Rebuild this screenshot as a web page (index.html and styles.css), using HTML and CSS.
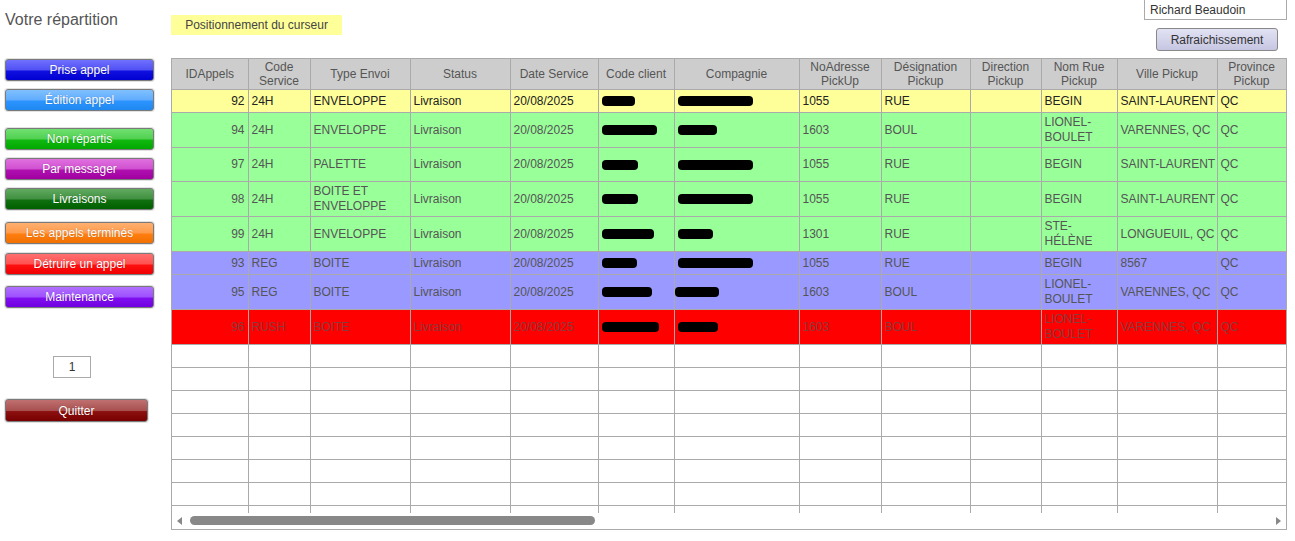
FILE: index.html
```html
<!DOCTYPE html>
<html lang="fr">
<head>
  <meta charset="UTF-8">
  <title>Votre répartition</title>
  <link rel="stylesheet" href="styles.css">
</head>
<body>
  <div class="page">
    <div class="sidebar">
      <div class="title">Votre répartition</div>
      <div class="menu">
        <button class="btn btn-blue">Prise appel</button>
        <button class="btn btn-sky">Édition appel</button>
        <button class="btn btn-green space-lg">Non répartis</button>
        <button class="btn btn-magenta">Par messager</button>
        <button class="btn btn-dkgreen">Livraisons</button>
        <button class="btn btn-orange space-md">Les appels terminés</button>
        <button class="btn btn-red space-sm">Détruire un appel</button>
        <button class="btn btn-purple space-md">Maintenance</button>
      </div>
      <div class="pager"><input class="page-input" type="text" value="1"></div>
      <button class="btn btn-quit">Quitter</button>
    </div>

    <div class="main">
      <div class="topbar">
        <div class="cursor-box">Positionnement du curseur</div>
        <div class="user-area">
          <input class="user-input" type="text" value="Richard Beaudoin">
          <button class="refresh">Rafraichissement</button>
        </div>
      </div>

      <div class="grid-box">
        <div class="grid-view">
          <table class="grid">
            <colgroup>
              <col class="c-id"><col class="c-code"><col class="c-type"><col class="c-status"><col class="c-date">
              <col class="c-client"><col class="c-comp"><col class="c-no"><col class="c-desig"><col class="c-dir">
              <col class="c-rue"><col class="c-ville"><col class="c-prov">
            </colgroup>
            <thead>
              <tr>
                <th>IDAppels</th><th>Code<br>Service</th><th>Type Envoi</th><th>Status</th><th>Date Service</th>
                <th>Code client</th><th>Compagnie</th><th>NoAdresse<br>PickUp</th><th>Désignation<br>Pickup</th>
                <th>Direction<br>Pickup</th><th>Nom Rue<br>Pickup</th><th>Ville Pickup</th><th>Province<br>Pickup</th>
              </tr>
            </thead>
            <tbody>
              <tr class="row-yellow">
                <td class="num">92</td><td>24H</td><td>ENVELOPPE</td><td>Livraison</td><td>20/08/2025</td>
                <td><span class="blot b-33"></span></td><td><span class="blot b-75"></span></td>
                <td>1055</td><td>RUE</td><td></td><td>BEGIN</td><td class="nowrap">SAINT-LAURENT</td><td>QC</td>
              </tr>
              <tr class="row-green tall">
                <td class="num">94</td><td>24H</td><td>ENVELOPPE</td><td>Livraison</td><td>20/08/2025</td>
                <td><span class="blot b-55"></span></td><td><span class="blot b-39"></span></td>
                <td>1603</td><td>BOUL</td><td></td><td>LIONEL-<br>BOULET</td><td class="nowrap">VARENNES, QC</td><td>QC</td>
              </tr>
              <tr class="row-green tall">
                <td class="num">97</td><td>24H</td><td>PALETTE</td><td>Livraison</td><td>20/08/2025</td>
                <td><span class="blot b-36"></span></td><td><span class="blot b-75"></span></td>
                <td>1055</td><td>RUE</td><td></td><td>BEGIN</td><td class="nowrap">SAINT-LAURENT</td><td>QC</td>
              </tr>
              <tr class="row-green tall">
                <td class="num">98</td><td>24H</td><td>BOITE ET<br>ENVELOPPE</td><td>Livraison</td><td>20/08/2025</td>
                <td><span class="blot b-36"></span></td><td><span class="blot b-75"></span></td>
                <td>1055</td><td>RUE</td><td></td><td>BEGIN</td><td class="nowrap">SAINT-LAURENT</td><td>QC</td>
              </tr>
              <tr class="row-green tall">
                <td class="num">99</td><td>24H</td><td>ENVELOPPE</td><td>Livraison</td><td>20/08/2025</td>
                <td><span class="blot b-52"></span></td><td><span class="blot b-35"></span></td>
                <td>1301</td><td>RUE</td><td></td><td>STE-<br>HÉLÈNE</td><td class="nowrap">LONGUEUIL, QC</td><td>QC</td>
              </tr>
              <tr class="row-blue">
                <td class="num">93</td><td>REG</td><td>BOITE</td><td>Livraison</td><td>20/08/2025</td>
                <td><span class="blot b-35"></span></td><td><span class="blot b-75"></span></td>
                <td>1055</td><td>RUE</td><td></td><td>BEGIN</td><td class="nowrap">8567</td><td>QC</td>
              </tr>
              <tr class="row-blue tall">
                <td class="num">95</td><td>REG</td><td>BOITE</td><td>Livraison</td><td>20/08/2025</td>
                <td><span class="blot b-50"></span></td><td><span class="blot b-44 shift"></span></td>
                <td>1603</td><td>BOUL</td><td></td><td>LIONEL-<br>BOULET</td><td class="nowrap">VARENNES, QC</td><td>QC</td>
              </tr>
              <tr class="row-red tall">
                <td class="num">96</td><td>RUSH</td><td>BOITE</td><td>Livraison</td><td>20/08/2025</td>
                <td><span class="blot b-57"></span></td><td><span class="blot b-40"></span></td>
                <td>1603</td><td>BOUL</td><td></td><td>LIONEL-<br>BOULET</td><td class="nowrap">VARENNES, QC</td><td>QC</td>
              </tr>
              <tr class="row-empty"><td></td><td></td><td></td><td></td><td></td><td></td><td></td><td></td><td></td><td></td><td></td><td></td><td></td></tr>
              <tr class="row-empty"><td></td><td></td><td></td><td></td><td></td><td></td><td></td><td></td><td></td><td></td><td></td><td></td><td></td></tr>
              <tr class="row-empty"><td></td><td></td><td></td><td></td><td></td><td></td><td></td><td></td><td></td><td></td><td></td><td></td><td></td></tr>
              <tr class="row-empty"><td></td><td></td><td></td><td></td><td></td><td></td><td></td><td></td><td></td><td></td><td></td><td></td><td></td></tr>
              <tr class="row-empty"><td></td><td></td><td></td><td></td><td></td><td></td><td></td><td></td><td></td><td></td><td></td><td></td><td></td></tr>
              <tr class="row-empty"><td></td><td></td><td></td><td></td><td></td><td></td><td></td><td></td><td></td><td></td><td></td><td></td><td></td></tr>
              <tr class="row-empty"><td></td><td></td><td></td><td></td><td></td><td></td><td></td><td></td><td></td><td></td><td></td><td></td><td></td></tr>
              <tr class="row-empty"><td></td><td></td><td></td><td></td><td></td><td></td><td></td><td></td><td></td><td></td><td></td><td></td><td></td></tr>
            </tbody>
          </table>
        </div>
        <div class="hscroll">
          <span class="arrow arrow-left"></span>
          <div class="track"><div class="thumb"></div></div>
          <span class="arrow arrow-right"></span>
        </div>
      </div>
    </div>
  </div>
</body>
</html>
```

FILE: styles.css
```css
body {
  margin: 0;
  font-family: 'Liberation Sans', Arial, sans-serif;
  font-size: 12px;
  color: #333;
  background-color: #fff;
}
.page {
  display: flex;
  align-items: flex-start;
}
.sidebar {
  width: 149px;
  margin-left: 5px;
}
.title {
  font-size: 16px;
  line-height: 20px;
  color: #555;
  margin-top: 10px;
  height: 49px;
}
.menu {
  display: flex;
  flex-direction: column;
  gap: 8px;
}
.btn {
  display: block;
  width: 149px;
  height: 22px;
  padding: 0;
  border: 1px solid #7a7a7a;
  border-radius: 3px;
  font-family: 'Liberation Sans', Arial, sans-serif;
  font-size: 12px;
  color: #fff;
  text-shadow: 0 0 1px rgba(0, 0, 0, 0.3);
  cursor: pointer;
  box-shadow: 0 0 0 1px #e2e2e2;
}
.space-lg { margin-top: 9px; }
.space-md { margin-top: 4px; }
.space-sm { margin-top: 1px; }
.btn-purple.space-md { margin-top: 3px; }
.btn-blue { background: linear-gradient(#7070ff 0%, #5050f4 50%, #1010e0 55%, #0000d0 100%); }
.btn-sky { background: linear-gradient(#80c0ff 0%, #60acff 50%, #2c94ff 55%, #1e88f0 100%); }
.btn-green { background: linear-gradient(#70e070 0%, #50d050 50%, #10b810 55%, #00a800 100%); }
.btn-magenta { background: linear-gradient(#e070e0 0%, #d050d0 50%, #b010b0 55%, #a000a0 100%); }
.btn-dkgreen { background: linear-gradient(#60aa60 0%, #409040 50%, #107010 55%, #006000 100%); }
.btn-orange { background: linear-gradient(#ffb070 0%, #ff9a4a 50%, #ff7e10 55%, #f07000 100%); }
.btn-red { background: linear-gradient(#ff7070 0%, #ff5050 50%, #ff1010 55%, #f00000 100%); }
.btn-purple { background: linear-gradient(#b070ff 0%, #9e50ff 50%, #8010f0 55%, #7000e0 100%); }
.btn-quit {
  width: 143px;
  height: 23px;
  margin-top: 21px;
  background: linear-gradient(#c07070 0%, #a85050 50%, #8c1010 55%, #780000 100%);
}
.pager {
  margin-top: 48px;
  padding-left: 48px;
}
.page-input {
  display: block;
  width: 38px;
  height: 22px;
  box-sizing: border-box;
  border: 1px solid #aaa;
  text-align: center;
  font-family: 'Liberation Sans', Arial, sans-serif;
  font-size: 12px;
  color: #333;
  padding: 0;
}
.main {
  margin-left: 17px;
  width: 1116px;
}
.topbar {
  display: flex;
  justify-content: space-between;
  height: 58px;
}
.cursor-box {
  margin-top: 15px;
  width: 171px;
  height: 20px;
  line-height: 20px;
  text-align: center;
  background-color: #ffff99;
  color: #444;
}
.user-area {
  display: flex;
  flex-direction: column;
  align-items: flex-end;
}
.user-input {
  width: 143px;
  height: 20px;
  box-sizing: border-box;
  border: 1px solid #aaa;
  border-top: none;
  padding: 0 5px;
  font-family: 'Liberation Sans', Arial, sans-serif;
  font-size: 12px;
  color: #333;
}
.refresh {
  margin-top: 8px;
  margin-right: 9px;
  width: 122px;
  height: 23px;
  border: 1px solid #888;
  border-radius: 3px;
  background: linear-gradient(#e2e2f4, #c6c6e2);
  font-family: 'Liberation Sans', Arial, sans-serif;
  font-size: 12px;
  color: #333;
  padding: 0;
}
.grid-box {
  border: 1px solid #aaa;
  height: 472px;
  box-sizing: border-box;
}
.grid-view {
  height: 454px;
  overflow: hidden;
}
.grid {
  width: 1114px;
  table-layout: fixed;
  border-collapse: collapse;
}
.c-id { width: 76px; }
.c-code { width: 62px; }
.c-type { width: 100px; }
.c-status { width: 100px; }
.c-date { width: 88px; }
.c-client { width: 76px; }
.c-comp { width: 125px; }
.c-no { width: 82px; }
.c-desig { width: 89px; }
.c-dir { width: 71px; }
.c-rue { width: 76px; }
.c-ville { width: 100px; }
.c-prov { width: 69px; }
.grid th {
  background-color: #cdcdcd;
  color: #555;
  font-weight: normal;
  line-height: 14px;
  height: 30px;
  padding: 0 2px;
  border: 1px solid #aaa;
  border-top: none;
}
.grid td {
  height: 23px;
  line-height: 15px;
  padding: 2px 3px;
  border: 1px solid #aaa;
  vertical-align: middle;
  box-sizing: border-box;
}
.grid tr.tall td { height: 34px; }
.grid th:first-child, .grid td:first-child { border-left: none; }
.grid td.num { text-align: right; }
.grid td.nowrap { white-space: nowrap; padding-right: 1px; }
.row-yellow td { background-color: #ffff99; color: #222; }
.row-green td { background-color: #99ff99; color: #555; }
.row-blue td { background-color: #9999ff; color: #555; }
.row-red td { background-color: #ff0000; color: #8a3a3a; }
.row-empty td { background-color: #fff; }
.blot {
  display: inline-block;
  vertical-align: middle;
  height: 10px;
  background-color: #000;
  border-radius: 4px;
}
.blot.shift { margin-left: -3px; }
.b-33 { width: 33px; }
.b-35 { width: 35px; }
.b-36 { width: 36px; }
.b-39 { width: 39px; }
.b-40 { width: 40px; }
.b-44 { width: 44px; }
.b-50 { width: 50px; }
.b-52 { width: 52px; }
.b-55 { width: 55px; }
.b-57 { width: 57px; }
.b-75 { width: 75px; }
.hscroll {
  display: flex;
  align-items: center;
  height: 15px;
  padding: 0 5px;
}
.track {
  flex: 1;
  padding: 0 3px 0 8px;
}
.thumb {
  width: 405px;
  height: 9px;
  border-radius: 5px;
  background-color: #888;
}
.arrow {
  width: 0;
  height: 0;
  border-top: 4px solid transparent;
  border-bottom: 4px solid transparent;
}
.arrow-left { border-right: 5px solid #888; }
.arrow-right { border-left: 5px solid #888; }
```
